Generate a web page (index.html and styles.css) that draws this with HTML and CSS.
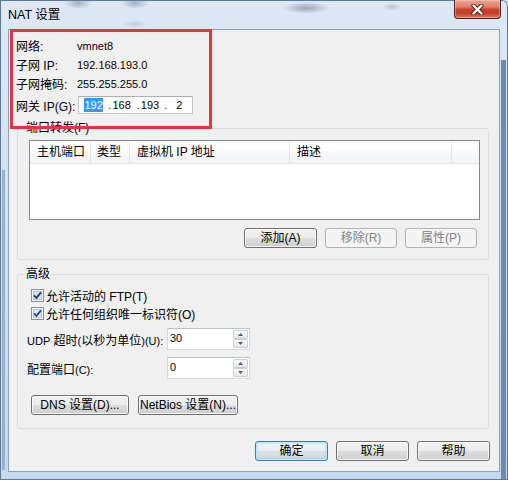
FILE: index.html
```html
<!DOCTYPE html>
<html lang="zh-CN">
<head>
<meta charset="utf-8">
<title>NAT 设置</title>
<link rel="stylesheet" href="styles.css">
</head>
<body>
<div class="window">
  <div class="titlebar">
    <span class="title">NAT 设置</span>
    <div class="close">
      <svg width="13" height="11" viewBox="0 0 13 11">
        <path d="M2.5 1.5 L10.5 9.5 M10.5 1.5 L2.5 9.5" stroke="#5a1f16" stroke-width="4.2" stroke-linecap="round"/>
        <path d="M2.5 1.5 L10.5 9.5 M10.5 1.5 L2.5 9.5" stroke="#ffffff" stroke-width="2.4" stroke-linecap="round"/>
      </svg>
    </div>
  </div>
  <div class="client">
    <div class="mark"></div>
    <div class="info">
      <div class="row"><span class="lbl">网络:</span><span class="num">vmnet8</span></div>
      <div class="row"><span class="lbl">子网 IP:</span><span class="num">192.168.193.0</span></div>
      <div class="row"><span class="lbl">子网掩码:</span><span class="num">255.255.255.0</span></div>
      <div class="row gw">
        <span class="lbl">网关 IP(G):</span>
        <div class="ipbox num">
          <span class="sel">192</span><span class="dot d1">.</span><span class="oct o2">168</span><span class="dot d2">.</span><span class="oct o3">193</span><span class="dot d3">.</span><span class="oct o4">2</span>
        </div>
      </div>
    </div>

    <div class="group port">
      <div class="gtitle gt-port">端口转发(F)</div>
      <div class="listview">
        <div class="lvhead">
          <div class="col c1">主机端口</div>
          <div class="col c2">类型</div>
          <div class="col c3">虚拟机 IP 地址</div>
          <div class="col c4">描述</div>
        </div>
      </div>
      <div class="btnrow">
        <div class="btn w73">添加(A)</div>
        <div class="btn w72 disabled">移除(R)</div>
        <div class="btn w72 disabled">属性(P)</div>
      </div>
    </div>

    <div class="group adv">
      <div class="gtitle gt-adv">高级</div>
      <div class="cbrow first">
        <svg class="cb" width="13" height="13" viewBox="0 0 13 13">
          <rect x="0.5" y="0.5" width="12" height="12" fill="#f6f6f6" stroke="#8e8f8f"/>
          <rect x="2.5" y="2.5" width="8" height="8" fill="#d7e3f1" stroke="#b7c3d2"/>
          <path d="M3 6.3 L5.4 8.8 L10 3.4" fill="none" stroke="#1d3f78" stroke-width="1.9"/>
        </svg>
        <span class="cblabel">允许活动的 FTP(T)</span>
      </div>
      <div class="cbrow">
        <svg class="cb" width="13" height="13" viewBox="0 0 13 13">
          <rect x="0.5" y="0.5" width="12" height="12" fill="#f6f6f6" stroke="#8e8f8f"/>
          <rect x="2.5" y="2.5" width="8" height="8" fill="#dfe7f1" stroke="#bcc6d2"/>
          <path d="M3 6.3 L5.4 8.8 L10 3.4" fill="none" stroke="#2c4f86" stroke-width="1.9"/>
        </svg>
        <span class="cblabel">允许任何组织唯一标识符(O)</span>
      </div>
      <div class="fieldrow r1">
        <span class="flabel"><span class="num">UDP</span> 超时<span class="num">(</span>以秒为单位<span class="num">)(U):</span></span>
        <div class="spin">
          <span class="spintext num">30</span>
          <div class="arrows">
            <div class="arr"><svg width="5" height="3" viewBox="0 0 5 3"><path d="M0 3 L2.5 0 L5 3Z" fill="#4a5d80"/></svg></div>
            <div class="arr"><svg width="5" height="3" viewBox="0 0 5 3"><path d="M0 0 L2.5 3 L5 0Z" fill="#4a5d80"/></svg></div>
          </div>
        </div>
      </div>
      <div class="fieldrow r2">
        <span class="flabel">配置端口<span class="num">(C):</span></span>
        <div class="spin">
          <span class="spintext num">0</span>
          <div class="arrows">
            <div class="arr"><svg width="5" height="3" viewBox="0 0 5 3"><path d="M0 3 L2.5 0 L5 3Z" fill="#4a5d80"/></svg></div>
            <div class="arr"><svg width="5" height="3" viewBox="0 0 5 3"><path d="M0 0 L2.5 3 L5 0Z" fill="#4a5d80"/></svg></div>
          </div>
        </div>
      </div>
      <div class="dnsrow">
        <div class="btn w98">DNS 设置(D)...</div>
        <div class="btn w100">NetBios 设置(N)...</div>
      </div>
    </div>

    <div class="footer">
      <div class="btn w73 default">确定</div>
      <div class="btn w73">取消</div>
      <div class="btn w73">帮助</div>
    </div>
  </div>
</div>
</body>
</html>
```
FILE: styles.css
```css
* { box-sizing: border-box; }
html, body { margin: 0; padding: 0; }
body {
  width: 508px;
  height: 480px;
  overflow: hidden;
  font-family: "Liberation Sans", "Noto Sans CJK SC", sans-serif;
  font-size: 12px;
  color: #000;
  background: #c9dbee;
}

.window {
  width: 508px;
  height: 480px;
  display: flex;
  flex-direction: column;
  border-radius: 0 6px 0 0;
  box-shadow: inset 0 0 0 1px #5f7896;
  background:
    radial-gradient(ellipse 14px 6px at 78px 3px, rgba(60,72,95,0.35), rgba(60,72,95,0)),
    radial-gradient(ellipse 14px 6px at 135px 3px, rgba(60,72,95,0.35), rgba(60,72,95,0)),
    radial-gradient(ellipse 12px 4px at 135px 24px, rgba(60,72,95,0.18), rgba(60,72,95,0)),
    radial-gradient(ellipse 24px 6px at 306px 8px, rgba(60,72,95,0.4), rgba(60,72,95,0)),
    radial-gradient(ellipse 10px 4px at 392px 7px, rgba(60,72,95,0.2), rgba(60,72,95,0)),
    linear-gradient(#6f8aaa, #6f8aaa) 501px 60px / 5px 420px no-repeat,
    linear-gradient(#93b2d7, #93b2d7) 2px 170px / 3px 300px no-repeat,
    linear-gradient(#dde8f4, #c6d9ee);
}

/* title bar */
.titlebar {
  height: 29px;
  flex: none;
  display: flex;
  align-items: center;
  padding-left: 8px;
}
.title {
  font-size: 12.5px;
  line-height: 14px;
  margin-top: 1px;
  color: #000;
}
.close {
  margin-left: auto;
  margin-right: 7px;
  align-self: flex-start;
  width: 47px;
  height: 19px;
  border: 1px solid #5a1f16;
  border-top: none;
  border-radius: 0 0 4px 4px;
  background: linear-gradient(#eaa797 0%, #dd8069 38%, #c8442b 52%, #c23d25 72%, #d9765e 100%);
  box-shadow: inset 0 0 0 1px rgba(255, 205, 195, 0.45);
  display: flex;
  align-items: center;
  justify-content: center;
}

/* client area */
.client {
  flex: 1;
  margin: 0 8px 8px 8px;
  background: #f0f0f0;
  border: 1px solid #8da2b8;
  padding: 0 10px 0 8px;
  position: relative;
  display: flex;
  flex-direction: column;
}

.mark {
  position: absolute;
  left: 1px;
  top: -1px;
  width: 202px;
  height: 100px;
  border: 3px solid #e4343d;
  z-index: 2;
}

.num { font-size: 11px; }

.info {
  padding-top: 6px;
  margin-left: -1px;
}
.row {
  display: flex;
  align-items: center;
  height: 19px;
}
.lbl { width: 61px; flex: none; white-space: nowrap; }
.row.gw { margin-top: 3px; height: 18px; }
.ipbox {
  margin-left: 1px;
  width: 115px;
  height: 18px;
  border: 1px solid #c3c8cf;
  border-top-color: #abadb3;
  background: #fff;
  display: flex;
  align-items: center;
  padding-left: 5px;
  line-height: 14px;
}
.sel { background: #3399ff; color: #fff; padding: 0 0.5px; }
.d1 { margin-left: 5px; }
.o2 { margin-left: 1px; }
.d2 { margin-left: 6px; }
.o3 { margin-left: 1px; }
.d3 { margin-left: 5px; }
.o4 { margin-left: 9px; }

/* group boxes */
.group {
  margin-top: 14px;
  border: 1px solid #d5dfe5;
  border-radius: 3px;
  display: flex;
  flex-direction: column;
}
.gtitle {
  margin-top: -8px;
  height: 14px;
  line-height: 14px;
  padding: 0 1px;
  background: #f0f0f0;
  align-self: flex-start;
}
.port { padding: 0 8px 11px 11px; }
.gt-port { margin-left: -4px; }
.adv { padding: 0 8px 13px 9px; }
.gt-adv { margin-left: -2px; }

/* list view */
.listview {
  margin-top: 5px;
  height: 80px;
  border: 1px solid #828790;
  background: #fff;
}
.lvhead {
  display: flex;
  height: 23px;
  border-bottom: 1px solid #e5e5e5;
  background: linear-gradient(#ffffff 0%, #ffffff 45%, #f7f8fa 46%, #f2f3f5 100%);
}
.col {
  padding-left: 7px;
  line-height: 22px;
  border-right: 1px solid #e3e5e8;
  white-space: nowrap;
}
.c1 { width: 61px; }
.c2 { width: 39px; padding-left: 6px; }
.c3 { width: 160px; }
.c4 { width: 162px; }

.btnrow {
  display: flex;
  justify-content: flex-end;
  gap: 8px;
  margin-top: 8px;
  padding-right: 3px;
}

/* buttons */
.btn {
  height: 20px;
  border: 1px solid #707070;
  border-radius: 3px;
  background: linear-gradient(#f2f2f2 0%, #ebebeb 48%, #dddddd 52%, #cfcfcf 100%);
  box-shadow: inset 0 0 0 1px rgba(255, 255, 255, 0.75);
  display: flex;
  align-items: center;
  justify-content: center;
  white-space: nowrap;
  line-height: 14px;
  flex: none;
}
.w72 { width: 72px; }
.w73 { width: 73px; }
.w98 { width: 98px; }
.w100 { width: 100px; }
.btn.disabled {
  border-color: #adb2b5;
  background: #f4f4f4;
  box-shadow: none;
  color: #838383;
}
.btn.default {
  border-color: #3c7fb1;
  background: linear-gradient(#f3f7f9 0%, #eaeef0 48%, #dbe1e4 52%, #d0d8dc 100%);
  box-shadow: inset 0 0 0 1px #bfe6f8, inset 0 0 2px 2px rgba(120, 205, 245, 0.35);
}

/* advanced */
.cbrow {
  display: flex;
  align-items: center;
  height: 18px;
  margin-left: 4px;
}
.cbrow.first { margin-top: 5px; }
.cb { flex: none; display: block; }
.cblabel { margin-left: 2px; white-space: nowrap; }

.fieldrow {
  display: flex;
  align-items: center;
  height: 22px;
}
.fieldrow.r1 { margin-top: 6px; }
.fieldrow.r2 { margin-top: 7px; }
.flabel { width: 140px; flex: none; white-space: nowrap; }

.spin {
  width: 83px;
  height: 22px;
  display: flex;
  border: 1px solid #d6dae0;
  border-top-color: #bcc1c8;
  background: #fff;
}
.spintext {
  flex: 1;
  padding: 2px 0 0 2px;
  line-height: 14px;
}
.arrows {
  width: 16px;
  display: flex;
  flex-direction: column;
  padding: 1px 1px 1px 0;
}
.arr {
  flex: 1;
  border: 1px solid #c9cdd3;
  border-radius: 2px;
  background: linear-gradient(#fafafa, #e6e8eb);
  display: flex;
  align-items: center;
  justify-content: center;
}
.arr svg { display: block; }

.dnsrow {
  display: flex;
  gap: 9px;
  margin-top: 16px;
  margin-left: 4px;
}

.footer {
  display: flex;
  justify-content: flex-end;
  gap: 8px;
  margin-top: 12px;
  margin-right: -1px;
}
```
